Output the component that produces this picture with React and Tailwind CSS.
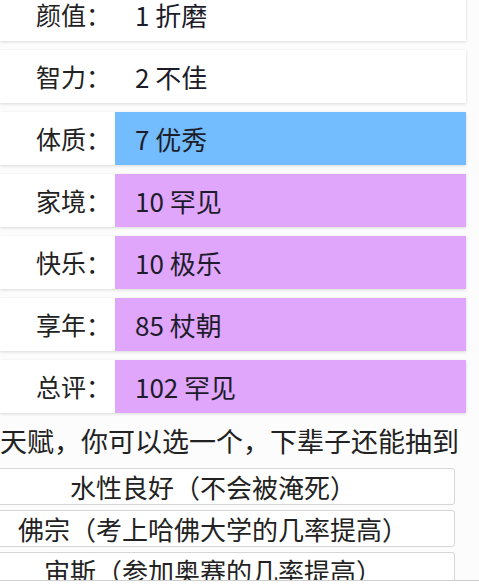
const rows = [
  { label: '颜值：', value: '1 折磨', tone: 'bg-white' },
  { label: '智力：', value: '2 不佳', tone: 'bg-white' },
  { label: '体质：', value: '7 优秀', tone: 'bg-[#73bcfd]' },
  { label: '家境：', value: '10 罕见', tone: 'bg-[#e0a6fb]' },
  { label: '快乐：', value: '10 极乐', tone: 'bg-[#e0a6fb]' },
  { label: '享年：', value: '85 杖朝', tone: 'bg-[#e0a6fb]' },
  { label: '总评：', value: '102 罕见', tone: 'bg-[#e0a6fb]' },
]

const talents = ['水性良好（不会被淹死）', '佛宗（考上哈佛大学的几率提高）', '宙斯（参加奥赛的几率提高）']

export default function App() {
  return (
    <div className="relative h-[584px] w-[479px] overflow-hidden bg-[#fcfcfc] font-['Noto_Sans_CJK_SC',sans-serif] text-[#222] [text-spacing-trim:space-all]">
      <div className="-mt-[12px] flex w-[466px] flex-col gap-[9px]">
        {rows.map((row) => (
          <div key={row.label} className="flex h-[53px] bg-white shadow-[0_1px_3px_rgba(0,0,0,0.14)]">
            <div className="flex w-[115px] items-center justify-end pr-[4px] text-[25px]">{row.label}</div>
            <div className={`flex flex-1 items-center pl-[20px] text-[26px] text-[#1c1c2a] ${row.tone}`}>{row.value}</div>
          </div>
        ))}
      </div>

      <p className="mt-[10px] whitespace-nowrap text-[27px] leading-[36px]">
        天赋，你可以选一个，下辈子还能抽到
      </p>

      <div className="-ml-[29px] mt-[9px] flex w-[484px] flex-col gap-[5px]">
        {talents.map((talent) => (
          <button
            key={talent}
            type="button"
            className="h-[37px] whitespace-nowrap rounded-[3px] border border-[#d6d6d6] bg-white text-center text-[26px] leading-[35px] text-[#222]"
          >
            {talent}
          </button>
        ))}
      </div>

      <div className="absolute bottom-0 left-0 h-[4px] w-full border-t border-[#cfcfcf] bg-white" />
    </div>
  )
}
